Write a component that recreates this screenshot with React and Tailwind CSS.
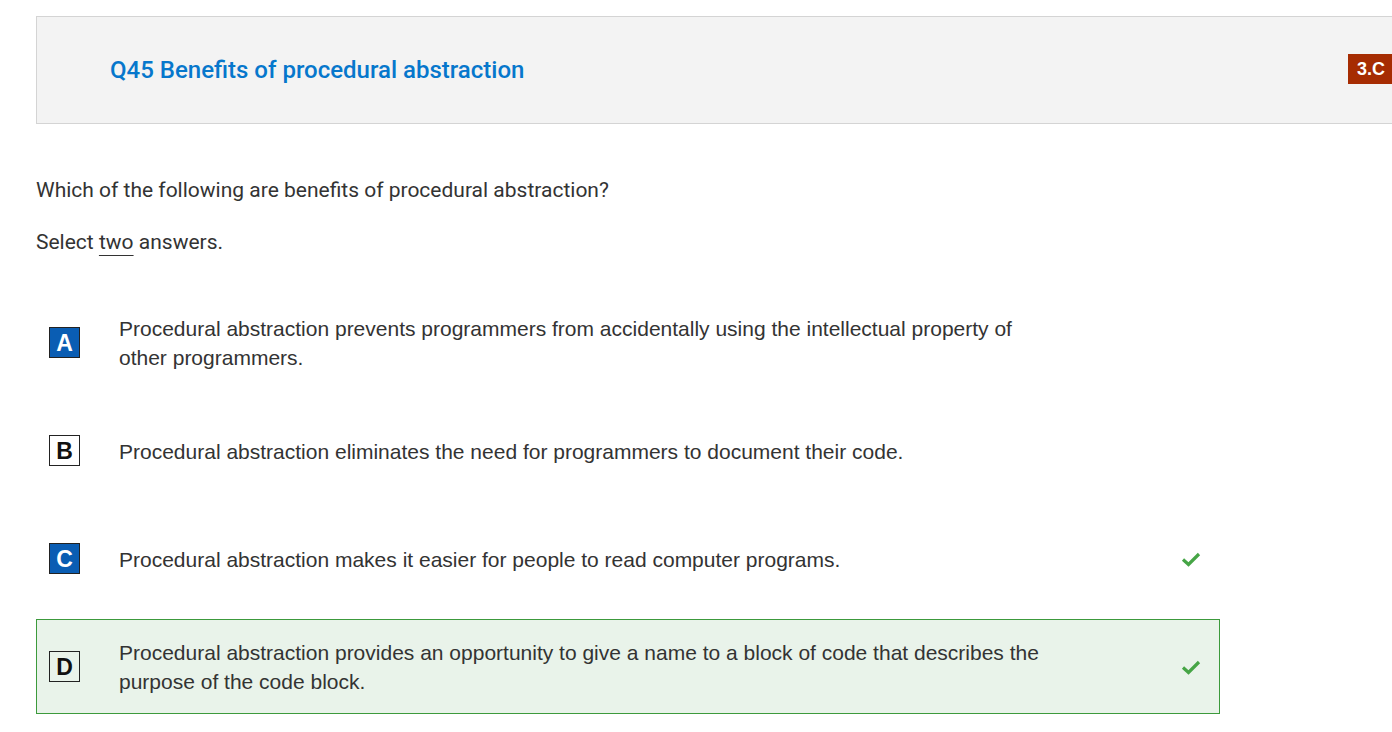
import React from 'react'

const OPTIONS = [
  { letter: 'A', text: 'Procedural abstraction prevents programmers from accidentally using the intellectual property of other programmers.', filled: true, correct: false, chosen: false },
  { letter: 'B', text: 'Procedural abstraction eliminates the need for programmers to document their code.', filled: false, correct: false, chosen: false },
  { letter: 'C', text: 'Procedural abstraction makes it easier for people to read computer programs.', filled: true, correct: true, chosen: false },
  { letter: 'D', text: 'Procedural abstraction provides an opportunity to give a name to a block of code that describes the purpose of the code block.', filled: false, correct: true, chosen: true },
]

function Check() {
  return (
    <svg width="20" height="16" viewBox="0 0 20 16">
      <path d="M2 8.5 L7.5 13.5 L18 3" fill="none" stroke="#46a546" strokeWidth="3.2" />
    </svg>
  )
}

function Option({ letter, text, filled, correct, chosen }) {
  return (
    <div
      className={`flex items-center h-[95px] w-[1184px] mb-[13px] border pl-[12px] ${chosen ? 'bg-[#e9f3ea] border-[#3c9a3c]' : 'border-transparent'}`}
    >
      <div
        className={`w-[31px] h-[31px] shrink-0 flex items-center justify-center border border-[#222] text-[23px] font-bold leading-none pt-[1px] ${filled ? 'bg-[#0a5db3] text-white' : 'text-[#111]'}`}
        style={{ fontFamily: '"Liberation Sans", Arial, sans-serif' }}
      >
        {letter}
      </div>
      <p
        className="ml-[39px] w-[930px] shrink-0 text-[21px] leading-[29px] text-[#333] pt-[1px]"
        style={{ fontFamily: '"Liberation Sans", Arial, sans-serif' }}
      >
        {text}
      </p>
      <div className="ml-[132px] w-[20px] flex items-center">{correct && <Check />}</div>
    </div>
  )
}

export default function App() {
  return (
    <div className="w-[1392px] h-[732px] overflow-hidden bg-white" style={{ fontFamily: 'Roboto, sans-serif' }}>
      <div className="pt-[16px] pl-[36px]">
        {/* header */}
        <div className="w-[1380px] h-[108px] bg-[#f3f3f3] border border-[#d4d4d4] flex items-center pl-[73px]">
          <h1 className="text-[24px] font-medium text-[#0677cc]">Q45 Benefits of procedural abstraction</h1>
          <span className="ml-auto mr-[19px] h-[30px] w-[48px] shrink-0 bg-[#a62c02] text-white font-bold text-[18px] flex items-center pl-[9px] mt-[-2px]"
            style={{ fontFamily: '"Liberation Sans", Arial, sans-serif' }}>3.C</span>
        </div>

        <p className="mt-[52px] text-[21px] leading-[28px] text-[#333]">Which of the following are benefits of procedural abstraction?</p>
        <p className="mt-[24px] text-[21px] leading-[28px] text-[#333]">
          Select <span className="underline underline-offset-[6px] decoration-1">two</span> answers.
        </p>

        <div className="mt-[39px]">
          {OPTIONS.map(o => <Option key={o.letter} {...o} />)}
        </div>
      </div>
    </div>
  )
}
